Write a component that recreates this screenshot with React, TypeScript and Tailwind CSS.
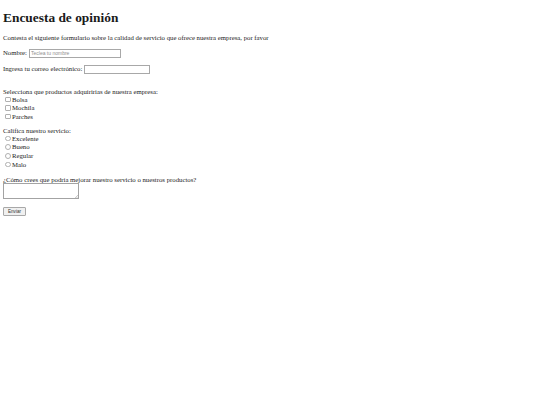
import { useState } from 'react'

const productos = ['Bolsa', 'Mochila', 'Parches']
const calificaciones = ['Excelente', 'Bueno', 'Regular', 'Malo']

export default function App() {
  const [nombre, setNombre] = useState('')
  const [correo, setCorreo] = useState('')
  const [comentario, setComentario] = useState('')

  return (
    <div className="min-h-screen bg-white px-[3px] pt-[9.5px] text-[6.75px] leading-[7.5px] text-[#1a1a1a] font-['Liberation_Serif',serif]">
      <h1 className="text-[13.4px] leading-[15px] font-bold">Encuesta de opinión</h1>
      <p className="mt-[9.5px]">
        Contesta el siguiente formulario sobre la calidad de servicio que ofrece nuestra empresa, por favor
      </p>

      <form onSubmit={e => e.preventDefault()}>
        <div className="mt-[7px] flex items-center">
          <label htmlFor="nombre">Nombre:</label>
          <input
            id="nombre"
            type="text"
            value={nombre}
            onChange={e => setNombre(e.target.value)}
            placeholder="Teclea tu nombre"
            className="ml-[2px] h-[9px] w-[92px] border border-[#a8a8a8] px-[1px] text-[5px] font-['Liberation_Sans',sans-serif] placeholder:text-[#8f8f8f] outline-none"
          />
        </div>

        <div className="mt-[7px] flex items-center">
          <label htmlFor="correo">Ingresa tu correo electrónico:</label>
          <input
            id="correo"
            type="email"
            value={correo}
            onChange={e => setCorreo(e.target.value)}
            className="ml-[2px] h-[9px] w-[66px] border border-[#a8a8a8] px-[1px] text-[5px] font-['Liberation_Sans',sans-serif] outline-none"
          />
        </div>

        <p className="mt-[14px]">Selecciona que productos adquiririas de nuestra empresa:</p>
        <div className="flex flex-col">
          {productos.map(p => (
            <label key={p} className="flex h-[8.6px] items-center">
              <input
                type="checkbox"
                className="ml-[2px] mr-[1.5px] h-[5.5px] w-[5.5px] appearance-none rounded-[1px] border border-[#b0b0b0] bg-white checked:bg-[#0075ff]"
              />
              {p}
            </label>
          ))}
        </div>

        <p className="mt-[6px]">Califica nuestro servicio:</p>
        <div className="flex flex-col">
          {calificaciones.map(c => (
            <label key={c} className="flex h-[8.6px] items-center">
              <input
                type="radio"
                name="servicio"
                className="ml-[2px] mr-[1.5px] h-[5.5px] w-[5.5px] appearance-none rounded-full border border-[#b0b0b0] bg-white checked:border-[#0075ff] checked:bg-[#0075ff]"
              />
              {c}
            </label>
          ))}
        </div>

        <p className="mt-[7px]">¿Cómo crees que podría mejorar nuestro servicio o nuestros productos?</p>
        <div className="relative w-[76px]">
          <textarea
            value={comentario}
            onChange={e => setComentario(e.target.value)}
            className="block h-[16px] w-[76px] resize-none border border-[#a3a3a3] text-[5px] outline-none"
          />
          <svg className="pointer-events-none absolute bottom-[1px] right-[1px]" width="3" height="3" viewBox="0 0 3 3">
            <path d="M3 0L0 3M3 1.5L1.5 3" stroke="#9a9a9a" strokeWidth="0.5" />
          </svg>
        </div>

        <button
          type="submit"
          className="mt-[8px] block h-[9px] w-[23px] rounded-[1px] border border-[#a8a8a8] bg-[#f0f0f0] text-[4.6px] leading-[7px] text-[#333] font-['Liberation_Sans',sans-serif]"
        >
          Enviar
        </button>
      </form>
    </div>
  )
}
